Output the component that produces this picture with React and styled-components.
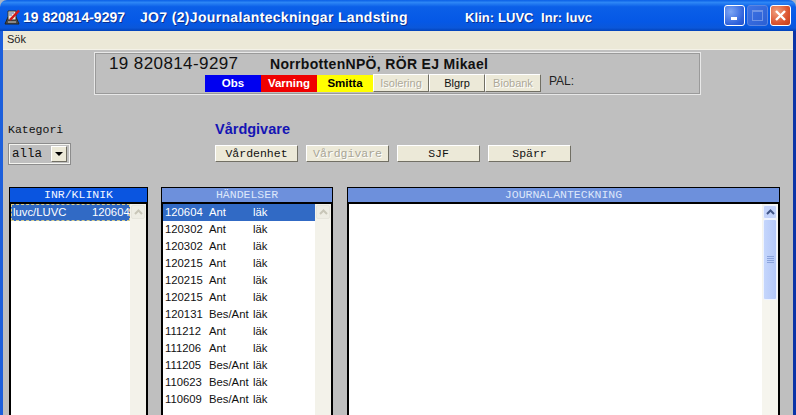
import React from "react"
import styled, { createGlobalStyle } from "styled-components"

const GlobalStyle = createGlobalStyle`
  html, body { margin: 0; padding: 0; background: #c0c0c0; }
  body { font-family: "Liberation Sans", Arial, sans-serif; }
`

const Frame = styled.div`
  width: 796px;
  height: 415px;
  overflow: hidden;
  display: flex;
  flex-direction: column;
  background: #a9b4c6;
`

const TitleBar = styled.div`
  height: 31px;
  flex: none;
  box-sizing: border-box;
  display: flex;
  align-items: center;
  padding: 3px 5px 0 4px;
  border-radius: 7px 7px 0 0;
  background: linear-gradient(180deg, #0a5fe6 0%, #2d86f5 8%, #0b5fe8 22%, #0558e6 70%, #0a57da 90%, #0342b8 100%);
  color: #fff;
  font: bold 14px "Liberation Sans", Arial, sans-serif;
  text-shadow: 1px 1px 0 #0a2f90;
  text-rendering: geometricPrecision;
  white-space: nowrap;
`

const TitleIcon = styled.svg`
  width: 17px;
  height: 16px;
  flex: none;
  margin-right: 2px;
`

const TitleText = styled.span`
  width: ${p => p.$width}px;
  flex: none;
  font-size: ${p => p.$size || 14}px;
  letter-spacing: ${p => p.$spacing || 0}px;
`

const WinButtons = styled.div`
  margin-left: auto;
  margin-top: -3px;
  display: flex;
  gap: 2px;
`

const WinButton = styled.div`
  width: 21px;
  height: 21px;
  box-sizing: border-box;
  border: 1px solid ${p => (p.$dim ? "#5b86e0" : "#fff")};
  border-radius: 3px;
  display: flex;
  align-items: center;
  justify-content: center;
  background: ${p =>
    p.$close
      ? "radial-gradient(circle at 30% 30%, #f0a080, #dc5530 60%, #c23c18)"
      : p.$dim
      ? "linear-gradient(135deg, #3f74e4, #2b5fd4)"
      : "radial-gradient(circle at 30% 30%, #7da6f4, #2f62dc 70%, #2452c8)"};
`

const Body = styled.div`
  flex: 1;
  min-height: 0;
  display: flex;
  flex-direction: column;
  border-left: 3px solid #1c5fdc;
  border-right: 3px solid #0a34a8;
  background: #bfbfbf;
`

const MenuBar = styled.div`
  height: 19px;
  flex: none;
  box-sizing: border-box;
  background: #ece9d8;
  padding: 2px 0 0 4px;
  font-size: 11px;
  color: #222;
  border-bottom: 1px solid #f4f2e8;
`

const PatientBox = styled.div`
  width: 607px;
  height: 43px;
  flex: none;
  box-sizing: border-box;
  margin: 2px 0 0 91px;
  border: 1px solid #e8e8e8;
  outline: 1px solid #9a9a9a;
  outline-offset: -2px;
  padding: 1px 0 0 14px;
  display: flex;
  flex-direction: column;
`

const PatientRow = styled.div`
  display: flex;
  align-items: baseline;
  height: 19px;
  color: #111;
`

const PatientId = styled.span`
  font-size: 17px;
  letter-spacing: 0.4px;
  width: 161px;
  flex: none;
`

const PatientName = styled.span`
  font-size: 14px;
  font-weight: bold;
  letter-spacing: 0.32px;
`

const FlagRow = styled.div`
  display: flex;
  align-items: center;
  height: 18px;
  margin: 1px 0 0 96px;
`

const Flag = styled.div`
  width: 56px;
  height: 17px;
  display: flex;
  align-items: center;
  justify-content: center;
  font-size: 11.5px;
  font-weight: bold;
  background: ${p => p.$bg};
  color: ${p => p.$fg};
`

const FlagButton = styled.div`
  width: 56px;
  height: 18px;
  box-sizing: border-box;
  display: flex;
  align-items: center;
  justify-content: center;
  font-size: 11px;
  background: #ece9d8;
  border: 1px solid;
  border-color: #fff #716f64 #716f64 #fff;
  color: ${p => (p.$off ? "#aca899" : "#111")};
  text-shadow: ${p => (p.$off ? "1px 1px 0 #fff" : "none")};
`

const PalLabel = styled.span`
  font-size: 12px;
  margin: -4px 0 0 8px;
  color: #222;
`

const Controls = styled.div`
  display: flex;
  flex: none;
  height: 92px;
  padding: 28px 0 0 5px;
  box-sizing: border-box;
`

const KategoriCol = styled.div`
  width: 207px;
  flex: none;
`

const MonoLabel = styled.div`
  font: 11.5px "Liberation Mono", "Courier New", monospace;
  color: #111;
  height: 13px;
  line-height: 13px;
`

const Combo = styled.div`
  width: 63px;
  height: 22px;
  box-sizing: border-box;
  margin-top: 7px;
  border: 2px solid #f4f4f0;
  outline: 1px solid #8c8c8c;
  outline-offset: -1px;
  display: flex;
  align-items: center;
  justify-content: space-between;
  padding: 0 2px 0 2px;
  font: 12.5px "Liberation Mono", "Courier New", monospace;
  color: #111;
`

const ComboArrow = styled.div`
  width: 16px;
  height: 16px;
  box-sizing: border-box;
  background: #ece9d8;
  border: 1px solid;
  border-color: #fff #716f64 #716f64 #fff;
  display: flex;
  align-items: center;
  justify-content: center;
  &::after {
    content: "";
    border-left: 4px solid transparent;
    border-right: 4px solid transparent;
    border-top: 4px solid #000;
  }
`

const CareCol = styled.div`
  display: flex;
  flex-direction: column;
`

const CareTitle = styled.div`
  font-size: 14.5px;
  font-weight: bold;
  color: #1414b4;
  height: 17px;
  line-height: 16px;
  margin-top: -2px;
`

const CareButtons = styled.div`
  display: flex;
  gap: 8px;
  margin-top: 7px;
`

const CareButton = styled.div`
  width: 83px;
  height: 17px;
  box-sizing: border-box;
  display: flex;
  align-items: center;
  justify-content: center;
  background: #ece9d8;
  border: 1px solid;
  border-color: #fff #716f64 #716f64 #fff;
  font: 11.5px "Liberation Mono", "Courier New", monospace;
  color: ${p => (p.$off ? "#a8a596" : "#111")};
  text-shadow: ${p => (p.$off ? "1px 1px 0 #fff" : "none")};
`

const Panels = styled.div`
  flex: 1;
  min-height: 0;
  display: flex;
  padding: 0 0 0 6px;
`

const Panel = styled.div`
  width: ${p => p.$width}px;
  margin-left: ${p => p.$gap || 0}px;
  flex: none;
  display: flex;
  flex-direction: column;
  box-sizing: border-box;
  border: 1px solid #000;
  border-bottom: none;
  height: 240px;
`

const PanelHead = styled.div`
  height: 16px;
  flex: none;
  box-sizing: border-box;
  background: ${p => (p.$active ? "#0a55e0" : "#6d90dc")};
  color: ${p => (p.$active ? "#f2f6ff" : "#dce6fa")};
  font: 11.5px/14px "Liberation Mono", "Courier New", monospace;
  text-align: center;
  border-bottom: 2px solid #000;
`

const PanelBody = styled.div`
  flex: 1;
  min-height: 0;
  background: #fff;
  display: flex;
  border-left: 1px solid #000;
  border-right: 1px solid #000;
`

const ListArea = styled.div`
  flex: 1;
  min-width: 0;
  overflow: hidden;
`

const Row = styled.div`
  display: flex;
  align-items: center;
  height: 17px;
  box-sizing: border-box;
  font-size: 11.3px;
  padding: 0 0 2px 2px;
  color: ${p => (p.$selected ? "#fff" : "#111")};
  background: ${p => (p.$selected ? "#316ac5" : "transparent")};
  outline: ${p => (p.$focus ? "1px dashed #d8cf90" : "none")};
  outline-offset: -1px;
`

const Cell = styled.span`
  width: ${p => p.$width}px;
  flex: none;
  white-space: nowrap;
`

const ScrollTrack = styled.div`
  width: 16px;
  flex: none;
  padding-top: 1px;
  box-sizing: border-box;
  background: ${p => (p.$active ? "#f6f5ee" : "#f3f2ea")};
`

const ScrollUp = styled.div`
  height: 14px;
  box-sizing: border-box;
  margin: 0 1px;
  border: 1px solid ${p => (p.$active ? "#eef3ff" : "#e6e5dc")};
  border-radius: 2px;
  background: ${p => (p.$active ? "#c3d3fb" : "#eeede4")};
  display: flex;
  align-items: center;
  justify-content: center;
`

const ScrollThumb = styled.div`
  height: 81px;
  margin: 0 1px;
  box-sizing: border-box;
  border: 1px solid #eef3ff;
  border-radius: 2px;
  background: linear-gradient(90deg, #c5d6fc, #b4c8f8);
  display: flex;
  align-items: center;
  justify-content: center;
`

const Grip = styled.svg`
  width: 7px;
  height: 8px;
`

const events = [
  ["120604", "Ant", "läk"],
  ["120302", "Ant", "läk"],
  ["120302", "Ant", "läk"],
  ["120215", "Ant", "läk"],
  ["120215", "Ant", "läk"],
  ["120215", "Ant", "läk"],
  ["120131", "Bes/Ant", "läk"],
  ["111212", "Ant", "läk"],
  ["111206", "Ant", "läk"],
  ["111205", "Bes/Ant", "läk"],
  ["110623", "Bes/Ant", "läk"],
  ["110609", "Bes/Ant", "läk"],
]

const Chevron = ({ color }) => (
  <svg width="9" height="6" viewBox="0 0 9 6">
    <path d="M1 5 L4.5 1.5 L8 5" fill="none" stroke={color} strokeWidth="2" />
  </svg>
)

const Scrollbar = ({ active }) => (
  <ScrollTrack $active={active}>
    <ScrollUp $active={active}>
      <Chevron color={active ? "#3f5486" : "#c8c6b8"} />
    </ScrollUp>
    {active && (
      <ScrollThumb>
        <Grip viewBox="0 0 7 8">
          <path d="M0 .5h7M0 2.5h7M0 4.5h7M0 6.5h7" stroke="#8aa3dc" />
        </Grip>
      </ScrollThumb>
    )}
  </ScrollTrack>
)

export default function App() {
  return (
    <Frame>
      <GlobalStyle />
      <TitleBar>
        <TitleIcon viewBox="0 0 17 16">
          <path d="M1 15 L4 8 H12 L15 15 Z" fill="#4a4a4a" stroke="#222" />
          <path d="M4 2h8v9H4z" fill="#efeada" stroke="#333" />
          <path d="M5 4h5M5 6h3" stroke="#5a6ea8" />
          <path d="M6 11 L15 1.5" stroke="#d01818" strokeWidth="2.5" />
          <path d="M4 13h8" stroke="#c8c8c8" />
        </TitleIcon>
        <TitleText $width={117}>19 820814-9297</TitleText>
        <TitleText $width={325} $spacing={0.33}>JO7 (2)Journalanteckningar Landsting</TitleText>
        <TitleText $size={13} $spacing={0.07}>Klin: LUVC&nbsp; Inr: luvc</TitleText>
        <WinButtons>
          <WinButton>
            <svg width="9" height="9" viewBox="0 0 9 9">
              <rect x="1" y="6" width="6" height="3" fill="#fff" />
            </svg>
          </WinButton>
          <WinButton $dim>
            <svg width="13" height="13" viewBox="0 0 13 13">
              <rect x="1.5" y="1.5" width="10" height="10" fill="none" stroke="#6f94e6" />
              <rect x="1" y="1" width="11" height="2" fill="#6f94e6" />
            </svg>
          </WinButton>
          <WinButton $close>
            <svg width="13" height="13" viewBox="0 0 13 13">
              <path d="M2 2 L11 11 M11 2 L2 11" stroke="#fff" strokeWidth="2.4" />
            </svg>
          </WinButton>
        </WinButtons>
      </TitleBar>
      <Body>
        <MenuBar>Sök</MenuBar>
        <PatientBox>
          <PatientRow>
            <PatientId>19 820814-9297</PatientId>
            <PatientName>NorrbottenNPÖ, RÖR EJ Mikael</PatientName>
          </PatientRow>
          <FlagRow>
            <Flag $bg="#0000f0" $fg="#fff">Obs</Flag>
            <Flag $bg="#f00000" $fg="#fff">Varning</Flag>
            <Flag $bg="#ffff00" $fg="#000">Smitta</Flag>
            <FlagButton $off>Isolering</FlagButton>
            <FlagButton>Blgrp</FlagButton>
            <FlagButton $off>Biobank</FlagButton>
            <PalLabel>PAL:</PalLabel>
          </FlagRow>
        </PatientBox>
        <Controls>
          <KategoriCol>
            <MonoLabel>Kategori</MonoLabel>
            <Combo>
              alla
              <ComboArrow />
            </Combo>
          </KategoriCol>
          <CareCol>
            <CareTitle>Vårdgivare</CareTitle>
            <CareButtons>
              <CareButton>Vårdenhet</CareButton>
              <CareButton $off>Vårdgivare</CareButton>
              <CareButton>SJF</CareButton>
              <CareButton>Spärr</CareButton>
            </CareButtons>
          </CareCol>
        </Controls>
        <Panels>
          <Panel $width={139}>
            <PanelHead $active>INR/KLINIK</PanelHead>
            <PanelBody>
              <ListArea>
                <Row $selected $focus>
                  <Cell $width={79}>luvc/LUVC</Cell>
                  <Cell $width={38}>120604</Cell>
                </Row>
              </ListArea>
              <Scrollbar />
            </PanelBody>
          </Panel>
          <Panel $width={172} $gap={13}>
            <PanelHead>HÄNDELSER</PanelHead>
            <PanelBody>
              <ListArea>
                {events.map((e, i) => (
                  <Row key={i} $selected={i === 0}>
                    <Cell $width={44}>{e[0]}</Cell>
                    <Cell $width={44}>{e[1]}</Cell>
                    <Cell $width={30}>{e[2]}</Cell>
                  </Row>
                ))}
              </ListArea>
              <Scrollbar />
            </PanelBody>
          </Panel>
          <Panel $width={433} $gap={14}>
            <PanelHead>JOURNALANTECKNING</PanelHead>
            <PanelBody>
              <ListArea />
              <Scrollbar active />
            </PanelBody>
          </Panel>
        </Panels>
      </Body>
    </Frame>
  )
}
